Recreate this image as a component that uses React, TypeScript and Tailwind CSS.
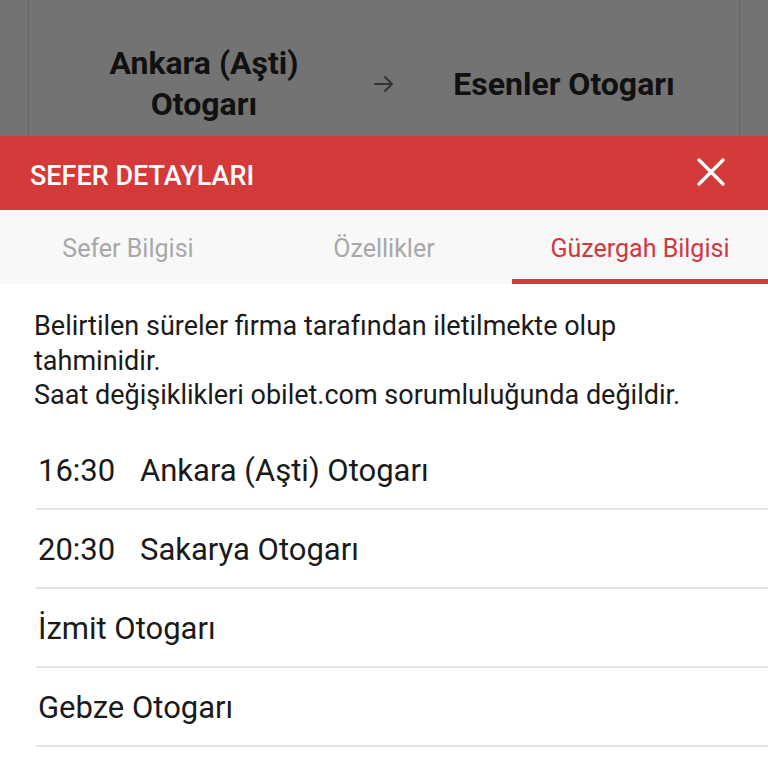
import React from "react";

const rows: { time?: string; name: string }[] = [
  { time: "16:30", name: "Ankara (Aşti) Otogarı" },
  { time: "20:30", name: "Sakarya Otogarı" },
  { name: "İzmit Otogarı" },
  { name: "Gebze Otogarı" },
];

export default function App() {
  return (
    <div className="w-[768px] h-[768px] overflow-hidden flex flex-col bg-white" style={{ fontFamily: "Roboto, 'Noto Sans', sans-serif" }}>
      {/* dimmed background card */}
      <div className="h-[136px] shrink-0 bg-[#737373] px-[28px] flex">
        <div className="flex-1 border-x border-[#666666] flex items-center pt-[32px]">
          <div className="w-[350px] flex justify-center">
            <div className="text-center text-[32px] leading-[41px] font-bold text-[#111111]">
              Ankara (Aşti)<br />Otogarı
            </div>
          </div>
          <div className="w-[10px] flex justify-center">
            <svg width="24" height="22" viewBox="0 0 24 22" fill="none" stroke="#333333" strokeWidth="2" strokeLinecap="round" strokeLinejoin="round" className="shrink-0">
              <path d="M3 11h17M13 4l7 7-7 7" />
            </svg>
          </div>
          <div className="flex-1 flex justify-center">
            <div className="text-[32px] font-bold text-[#111111]">Esenler Otogarı</div>
          </div>
        </div>
      </div>
      {/* red header */}
      <div className="h-[74px] shrink-0 bg-[#d53a3a] flex items-center justify-between pl-[30px] pr-[42px]">
        <div className="text-white text-[27px] font-medium pt-[6px]">SEFER DETAYLARI</div>
        <svg width="30" height="30" viewBox="0 0 30 30" stroke="white" strokeWidth="3.4" strokeLinecap="round" className="-mt-[2px] shrink-0">
          <path d="M3 3l24 24M27 3L3 27" />
        </svg>
      </div>
      {/* tabs */}
      <div className="h-[74px] shrink-0 bg-[#f8f8f8] flex">
        <div className="flex-1 flex flex-col">
          <div className="flex-1 flex items-center justify-center text-[25px] text-[#a8a8a8] pt-[8px]">Sefer Bilgisi</div>
          <div className="h-[5px]" />
        </div>
        <div className="flex-1 flex flex-col">
          <div className="flex-1 flex items-center justify-center text-[25px] text-[#a8a8a8] pt-[8px]">Özellikler</div>
          <div className="h-[5px]" />
        </div>
        <div className="flex-1 flex flex-col">
          <div className="flex-1 flex items-center justify-center text-[25px] text-[#d2373e] pt-[8px]">Güzergah Bilgisi</div>
          <div className="h-[5px] bg-[#d33b3f]" />
        </div>
      </div>
      {/* content */}
      <div className="flex-1 bg-white">
        <div className="pl-[34px] pr-[20px] pt-[25px] text-[27px] leading-[34.5px] text-[#1a1a1a]">
          Belirtilen süreler firma tarafından iletilmekte olup
          <br />
          tahminidir.
          <br />
          Saat değişiklikleri obilet.com sorumluluğunda değildir.
        </div>
        <div className="pl-[36px] mt-[18px]">
          {rows.map((r, i) => (
            <div key={i} className="h-[79px] border-b-2 border-[#e3e3e3] flex items-center text-[31px] text-[#1a1a1a] pl-[2px] pt-[4px]">
              {r.time && <span className="w-[102px]">{r.time}</span>}
              <span>{r.name}</span>
            </div>
          ))}
        </div>
      </div>
    </div>
  );
}
